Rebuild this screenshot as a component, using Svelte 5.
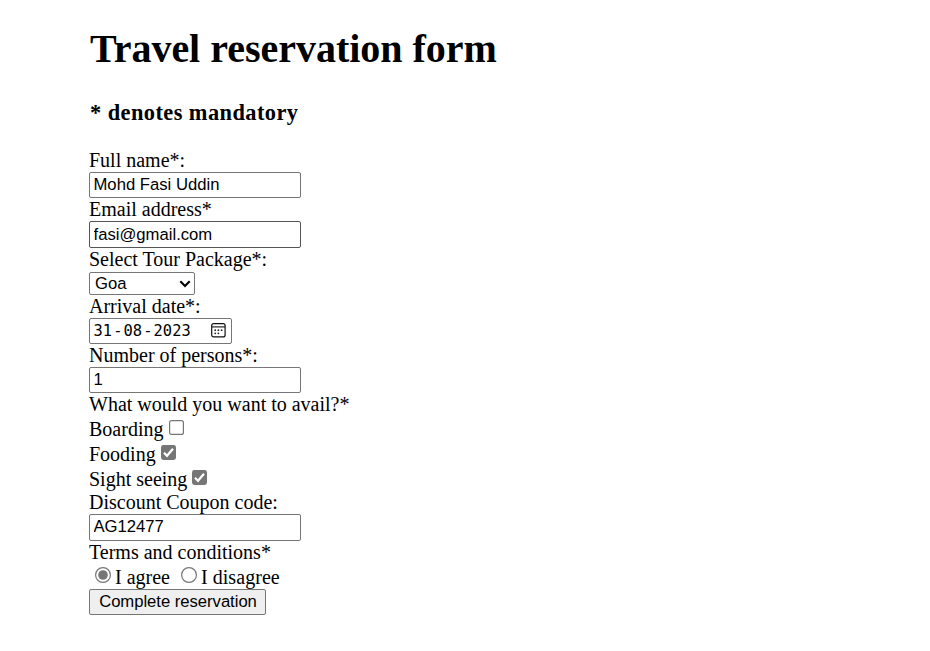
<script>
  let name = $state('Mohd Fasi Uddin');
  let email = $state('fasi@gmail.com');
  let date = $state(['31', '08', '2023']);
  let persons = $state('1');
  let coupon = $state('AG12477');
  let terms = $state('agree');
  let options = $state([
    { label: 'Boarding', checked: false, cls: 'boarding' },
    { label: 'Fooding', checked: true, cls: 'fooding' },
    { label: 'Sight seeing', checked: true, cls: 'sight' }
  ]);
</script>

<main>
  <h1>Travel reservation form</h1>
  <h3>* denotes mandatory</h3>
  <form onsubmit={(e) => e.preventDefault()}>
    <label class="line" for="name">Full name*:</label>
    <input id="name" class="field" bind:value={name} />
    <label class="line" for="email">Email address*</label>
    <input id="email" class="field tall dark" bind:value={email} />
    <label class="line high" for="tour">Select Tour Package*:</label>
    <div class="select">
      <select id="tour"><option>Goa</option></select>
      <svg width="12" height="8" viewBox="0 0 12 8"><path d="M1.3 1.2 6 6 10.7 1.2" fill="none" stroke="#000" stroke-width="2.1" /></svg>
    </div>
    <div class="line">Arrival date*:</div>
    <div class="date">
      <div class="parts">
        <span>{date[0]}</span><i>-</i><span>{date[1]}</span><i>-</i><span>{date[2]}</span>
      </div>
      <svg width="15" height="15" viewBox="0 0 15 15">
        <rect x=".7" y=".7" width="13.4" height="13.2" rx="2" fill="none" stroke="#111" stroke-width="1.2" />
        <path d="M1 3.9h13" stroke="#111" stroke-width="1.1" />
        <g fill="#222">
          <circle cx="4.2" cy="7.2" r=".9" /><circle cx="7.4" cy="7.2" r=".9" /><circle cx="10.6" cy="7.2" r=".9" />
          <circle cx="4.2" cy="10.3" r=".9" /><circle cx="7.4" cy="10.3" r=".9" />
        </g>
      </svg>
    </div>
    <label class="line" for="persons">Number of persons*:</label>
    <input id="persons" class="field" bind:value={persons} />
    <div class="line high">What would you want to avail?*</div>
    {#each options as option}
      <label class="option {option.cls}">
        <span>{option.label}</span>
        <input type="checkbox" bind:checked={option.checked} />
        <svg class="box" width="15" height="15" viewBox="0 0 15 15">
          {#if option.checked}
            <rect width="15" height="15" rx="2.4" fill="#767676" />
            <path d="M3 7.8 6 10.8 12 3.8" fill="none" stroke="#fff" stroke-width="2.2" />
          {:else}
            <rect x=".6" y=".6" width="13.8" height="13.8" rx="2" fill="#fff" stroke="#767676" stroke-width="1.2" />
          {/if}
        </svg>
      </label>
    {/each}
    <label class="line" for="coupon">Discount Coupon code:</label>
    <input id="coupon" class="field tall coupon" bind:value={coupon} />
    <div class="line high">Terms and conditions*</div>
    <div class="radios">
      {#each ['agree', 'disagree'] as value}
        <label class={value}>
          <input type="radio" name="terms" {value} bind:group={terms} />
          <svg width="16" height="16" viewBox="0 0 16 16">
            <circle cx="8" cy="8" r="7.4" fill="#fff" stroke="#767676" stroke-width="1.2" />
            {#if terms === value}<circle cx="8" cy="8" r="4.8" fill="#767676" />{/if}
          </svg>
          <span>I {value}</span>
        </label>
      {/each}
    </div>
    <button>Complete reservation</button>
  </form>
</main>

<style>
  :global(body) { margin: 0; background: #fff; }
  main { box-sizing: border-box; width: 930px; height: 651px; padding: 26px 0 0 89px; color: #000; font: 20px/23px "Liberation Serif", "Times New Roman", serif; white-space: nowrap; overflow: hidden; }
  h1 { margin: 0 0 0 1px; height: 73px; font-size: 40px; line-height: 46px; letter-spacing: -0.02px; }
  h3 { margin: 0 0 0 1px; height: 50px; font-size: 22.4px; line-height: 28px; letter-spacing: 0.43px; }
  form { display: flex; flex-direction: column; align-items: flex-start; }
  .line { height: 23px; }
  .high { height: 24px; }
  input, select, button { box-sizing: border-box; margin: 0; color: #000; font: 16.67px/20px "Liberation Sans", Arial, sans-serif; outline: none; }
  .field { width: 212px; height: 26px; padding: 0 3px 1px 3.5px; border: 1px solid #767676; border-radius: 2px; background: #fff; }
  .tall { height: 27px; padding-top: 1px; padding-bottom: 0; }
  .coupon { padding-top: 0; padding-bottom: 1px; }
  .dark { border-color: #555; }
  .select { display: flex; align-items: center; box-sizing: border-box; width: 106px; height: 23px; padding-right: 3px; border: 1px solid #767676; border-radius: 2px; }
  select { appearance: none; flex: 1; height: 21px; padding: 0 0 0 5px; border: 0; background: none; }
  .date { display: flex; align-items: center; justify-content: space-between; box-sizing: border-box; width: 143px; height: 26px; padding: 0 5px 0 3.5px; border: 1px solid #767676; border-radius: 2px; }
  .parts { display: flex; font: 15.4px/20px "DejaVu Sans Mono", monospace; }
  .parts i { width: 11.5px; font-style: normal; text-align: center; }
  .date svg { flex: none; margin-bottom: 1px; }
  .option { display: flex; height: 25px; line-height: 25px; }
  .sight { height: 24px; }
  .option input, .radios input { appearance: none; width: 0; height: 0; }
  .box { margin: 3px 0 0 5px; }
  .boarding .box { margin-left: 5.5px; }
  .radios { display: flex; height: 24px; line-height: 25px; padding-left: 6px; }
  .radios label { display: flex; }
  .radios svg { margin: 2px 4px 0 0; }
  .disagree { margin-left: 11px; letter-spacing: 0.05px; }
  button { width: 177px; height: 26px; padding: 0 0 1px 1px; border: 1px solid #767676; border-radius: 2px; background: #efefef; letter-spacing: -0.03px; }
</style>
